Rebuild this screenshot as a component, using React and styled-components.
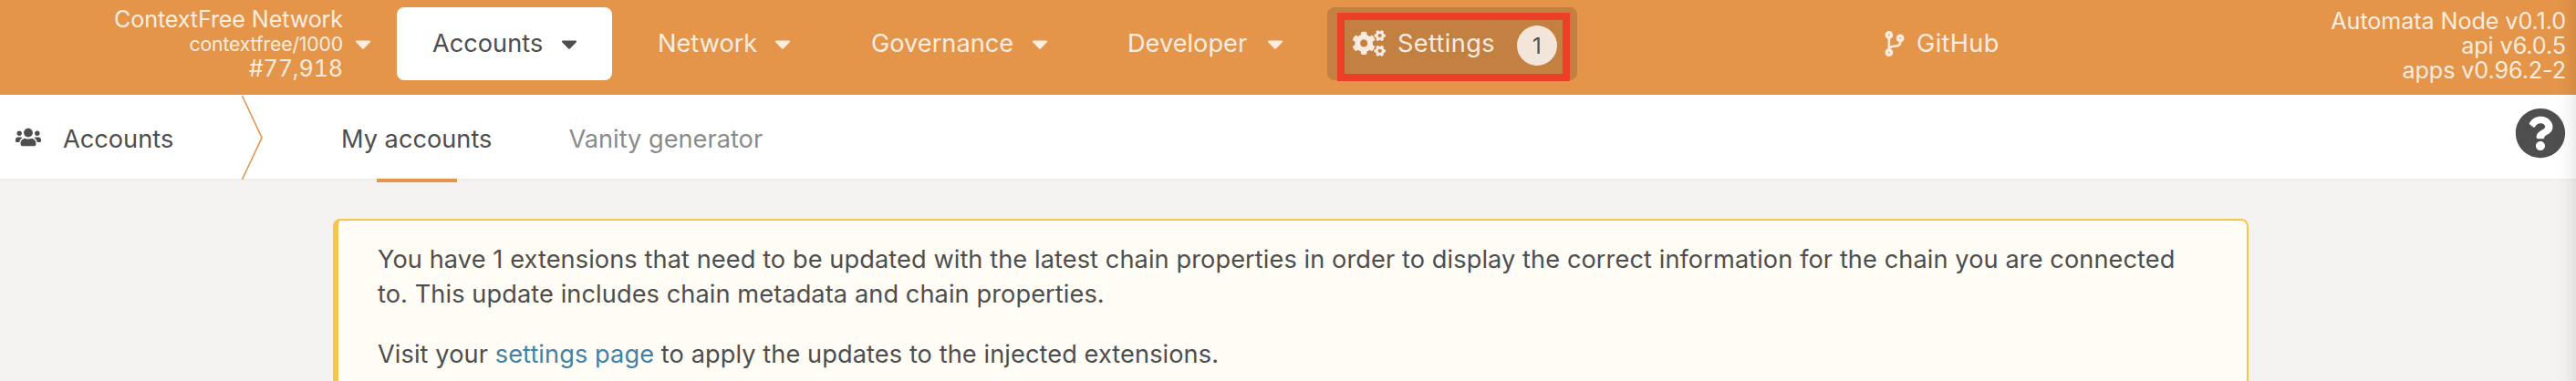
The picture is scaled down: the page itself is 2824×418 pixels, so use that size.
import React from 'react';
import styled, { createGlobalStyle } from 'styled-components';
import { FaCaretDown, FaCogs, FaCodeBranch, FaUsers, FaQuestionCircle } from 'react-icons/fa';

const GlobalStyle = createGlobalStyle`
  *, *::before, *::after { box-sizing: border-box; }
  body {
    margin: 0;
    background: #f4f3f1;
    color: #4e4e4e;
    font-family: Inter, 'Liberation Sans', sans-serif;
    font-size: 27.2px;
  }
`;

const Page = styled.div`
  position: relative;
  height: 418px;
  overflow: hidden;
`;

const EdgeShade = styled.div`
  position: absolute;
  inset: 0 0 0 auto;
  width: 22px;
  pointer-events: none;
  background: linear-gradient(to right, rgba(0, 0, 0, 0), rgba(0, 0, 0, 0.02) 50%, rgba(0, 0, 0, 0.075));
`;

const TopBar = styled.header`
  display: flex;
  align-items: flex-start;
  justify-content: space-between;
  height: 104px;
  padding: 8px 11px 0 0;
  background: #e49549;
  color: #fcede0;
`;

const BarGroup = styled.div`
  display: flex;
  align-items: flex-start;
`;

const ChainInfo = styled.div`
  display: flex;
  align-items: center;
  justify-content: flex-end;
  gap: 13px;
  width: 407px;
  height: 80px;
  margin-right: 28px;
`;

const ChainLines = styled.div`
  text-align: right;
  font-size: 25.2px;
  line-height: 27px;
  letter-spacing: -0.15px;
  font-feature-settings: 'tnum';
`;

const ChainName = styled.div`
  font-feature-settings: normal;
`;

const ChainSpec = styled.div`
  font-size: 21.2px;
  font-feature-settings: normal;
`;

const Caret = styled(FaCaretDown)`
  width: 18px;
  height: 28px;
  flex: none;
`;

const NavItem = styled.a`
  display: flex;
  align-items: center;
  justify-content: ${({ $caret }) => ($caret ? 'space-between' : 'flex-start')};
  width: ${({ $width }) => $width}px;
  height: 80px;
  margin-right: ${({ $after = 0 }) => $after}px;
  padding: 0 38px 1px 39px;
  border-radius: 8px;
  white-space: nowrap;
  background: ${({ $active }) => ($active ? '#fff' : 'transparent')};
  color: ${({ $active }) => ($active ? '#4e4e4e' : 'inherit')};
`;

const SettingsItem = styled(NavItem)`
  position: relative;
  padding: 0 22px 1px 28px;
  background: #c38041;
  color: #f9ebe0;
  letter-spacing: 0.35px;
`;

const ExternalItem = styled(NavItem)`
  letter-spacing: 0.35px;
`;

const CogsIcon = styled(FaCogs)`
  width: 36px;
  height: 29px;
  margin-right: 13px;
`;

const Badge = styled.span`
  display: flex;
  align-items: center;
  justify-content: center;
  width: 44px;
  height: 44px;
  margin: 5px 0 0 auto;
  border-radius: 50%;
  background: #f3e5da;
  color: #4e4e4e;
  font-size: 24px;
`;

const Highlight = styled.span`
  position: absolute;
  left: 11px;
  top: 6px;
  width: 255px;
  height: 75px;
  border: 8px solid #eb4025;
`;

const BranchIcon = styled(FaCodeBranch)`
  width: 24px;
  height: 28px;
  margin-right: 12px;
`;

const Versions = styled.div`
  padding-top: 2px;
  text-align: right;
  font-size: 25.2px;
  line-height: 27px;
  letter-spacing: -0.1px;
`;

const TabBar = styled.nav`
  display: flex;
  height: 94px;
  background: #fff;
  border-bottom: 2px solid #efeeee;
`;

const Section = styled.div`
  display: flex;
  align-items: center;
  gap: 24px;
  width: 264px;
  padding: 5px 0 0 17px;
`;

const UsersIcon = styled(FaUsers)`
  width: 28px;
  height: 23px;
  margin-top: -5px;
`;

const Divider = styled.svg`
  width: 25px;
  height: 94px;
  flex: none;
`;

const Tab = styled.a`
  display: flex;
  flex-direction: column;
  align-items: center;
  justify-content: space-between;
  height: 96px;
  margin-left: ${({ $active }) => ($active ? 85 : 84)}px;
  padding-top: 29px;
  line-height: 40px;
  color: ${({ $active }) => ($active ? '#4e4e4e' : '#8b8b8b')};

  &::after {
    content: '';
    width: 88px;
    height: 4px;
    background: ${({ $active }) => ($active ? '#e49549' : 'transparent')};
  }
`;

const HelpIcon = styled(FaQuestionCircle)`
  width: 56px;
  height: 56px;
  margin: 14px 11px 0 auto;
`;

const Notice = styled.article`
  width: 2100px;
  height: 240px;
  margin: 42px 0 0 365px;
  padding: 24px 70px 0 43px;
  border: 2px solid #f5c64a;
  border-left-width: 6px;
  border-radius: 8px;
  background: #fffdf6;
  letter-spacing: 0.08px;
  line-height: 38px;
`;

const Paragraph = styled.p`
  margin: 0 0 28px;
`;

const Link = styled.a`
  color: #4183a8;
`;

const menus = [
  { label: 'Accounts', width: 236, after: 11, active: true },
  { label: 'Network', width: 223, after: 11 },
  { label: 'Governance', width: 271, after: 10 },
  { label: 'Developer', width: 248, after: 10 },
];

export default function App() {
  return (
    <Page>
      <GlobalStyle />
      <TopBar>
        <BarGroup>
          <ChainInfo>
            <ChainLines>
              <ChainName>ContextFree Network</ChainName>
              <ChainSpec>contextfree/1000</ChainSpec>
              <div>#77,918</div>
            </ChainLines>
            <Caret />
          </ChainInfo>
          {menus.map(({ label, width, after, active }) => (
            <NavItem key={label} $caret $width={width} $after={after} $active={active}>
              {label}
              <Caret />
            </NavItem>
          ))}
          <SettingsItem $width={274} $after={297}>
            <CogsIcon />
            Settings
            <Badge>1</Badge>
            <Highlight />
          </SettingsItem>
          <ExternalItem $width={210}>
            <BranchIcon />
            GitHub
          </ExternalItem>
        </BarGroup>
        <Versions>
          <div>Automata Node v0.1.0</div>
          <div>api v6.0.5</div>
          <div>apps v0.96.2-2</div>
        </Versions>
      </TopBar>
      <TabBar>
        <Section>
          <UsersIcon />
          Accounts
        </Section>
        <Divider viewBox="0 0 25 94" fill="none" stroke="#e49549" strokeWidth="1.6">
          <path d="M1.5 1L23 47L1.5 93" />
        </Divider>
        <Tab $active>My accounts</Tab>
        <Tab>Vanity generator</Tab>
        <HelpIcon />
      </TabBar>
      <Notice>
        <Paragraph>
          You have 1 extensions that need to be updated with the latest chain properties in order to
          display the correct information for the chain you are connected to. This update includes
          chain metadata and chain properties.
        </Paragraph>
        <Paragraph>
          Visit your <Link>settings page</Link> to apply the updates to the injected extensions.
        </Paragraph>
      </Notice>
      <EdgeShade />
    </Page>
  );
}
